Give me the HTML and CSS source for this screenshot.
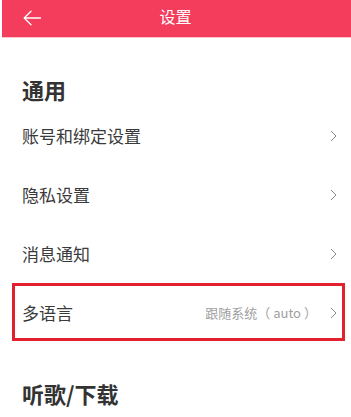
FILE: index.html
```html
<!DOCTYPE html>
<html lang="zh-CN">
<head>
<meta charset="utf-8">
<title>设置</title>
<link rel="stylesheet" href="styles.css">
</head>
<body>
<header class="topbar">
  <svg class="back" width="18" height="16" viewBox="0 0 18 16"><path d="M17.5 8H1.2M8 1.3L1.2 8L8 14.7" fill="none" stroke="#fff" stroke-width="1.3" stroke-linecap="round" stroke-linejoin="round"/></svg>
  <div class="title">设置</div>
</header>
<main>
  <h2 class="section">通用</h2>
  <div class="row"><span class="label">账号和绑定设置</span><span class="right"><svg class="chev" width="7" height="12" viewBox="0 0 7 12"><path d="M1 1l5 5-5 5" fill="none" stroke="#8a8a8a" stroke-width="1"/></svg></span></div>
  <div class="row"><span class="label">隐私设置</span><span class="right"><svg class="chev" width="7" height="12" viewBox="0 0 7 12"><path d="M1 1l5 5-5 5" fill="none" stroke="#8a8a8a" stroke-width="1"/></svg></span></div>
  <div class="row"><span class="label">消息通知</span><span class="right"><svg class="chev" width="7" height="12" viewBox="0 0 7 12"><path d="M1 1l5 5-5 5" fill="none" stroke="#8a8a8a" stroke-width="1"/></svg></span></div>
  <div class="row highlighted"><span class="label">多语言</span><span class="right"><span class="value">跟随系统（<span class="auto">auto</span>）</span><svg class="chev" width="7" height="12" viewBox="0 0 7 12"><path d="M1 1l5 5-5 5" fill="none" stroke="#8a8a8a" stroke-width="1"/></svg></span></div>
  <h2 class="section second">听歌/下载</h2>
</main>
</body>
</html>
```
FILE: styles.css
```css
html, body {
  margin: 0;
  padding: 0;
  background: #fff;
}
body {
  font-family: "Noto Sans CJK SC", "Noto Sans", sans-serif;
  color: #333;
  overflow: hidden;
}
.topbar {
  margin-left: 2px;
  height: 37px;
  background: #f43c5d;
  border-bottom: 1px solid #f9c3cd;
  display: flex;
  align-items: center;
  position: relative;
}
.back {
  margin-left: 21px;
  margin-top: -2px;
}
.title {
  position: absolute;
  left: 0;
  right: 0;
  top: -2px;
  text-align: center;
  color: #fff;
  font-size: 16px;
  line-height: 37px;
  pointer-events: none;
  margin-left: -2px;
}
.section {
  margin: 36px 0 0 0;
  padding: 0 22px 3px;
  height: 30px;
  line-height: 30px;
  font-size: 22px;
  font-weight: 700;
  color: #333;
}
.section.second {
  margin-top: 35px;
}
.row {
  height: 59px;
  display: flex;
  align-items: center;
  justify-content: space-between;
  padding: 0 14px 0 22px;
  position: relative;
}
.label {
  font-size: 17px;
  color: #3a3a3a;
  margin-top: -2px;
}
.right {
  display: flex;
  align-items: center;
  margin-top: -2px;
}
.value {
  font-size: 13px;
  color: #a0a0a0;
  margin-right: 13px;
}
.auto {
  padding: 0 3px;
}
.highlighted::after {
  content: "";
  position: absolute;
  left: 12px;
  right: 6px;
  top: -1px;
  height: 58px;
  border: 3px solid #e3202e;
  box-sizing: border-box;
}
```
